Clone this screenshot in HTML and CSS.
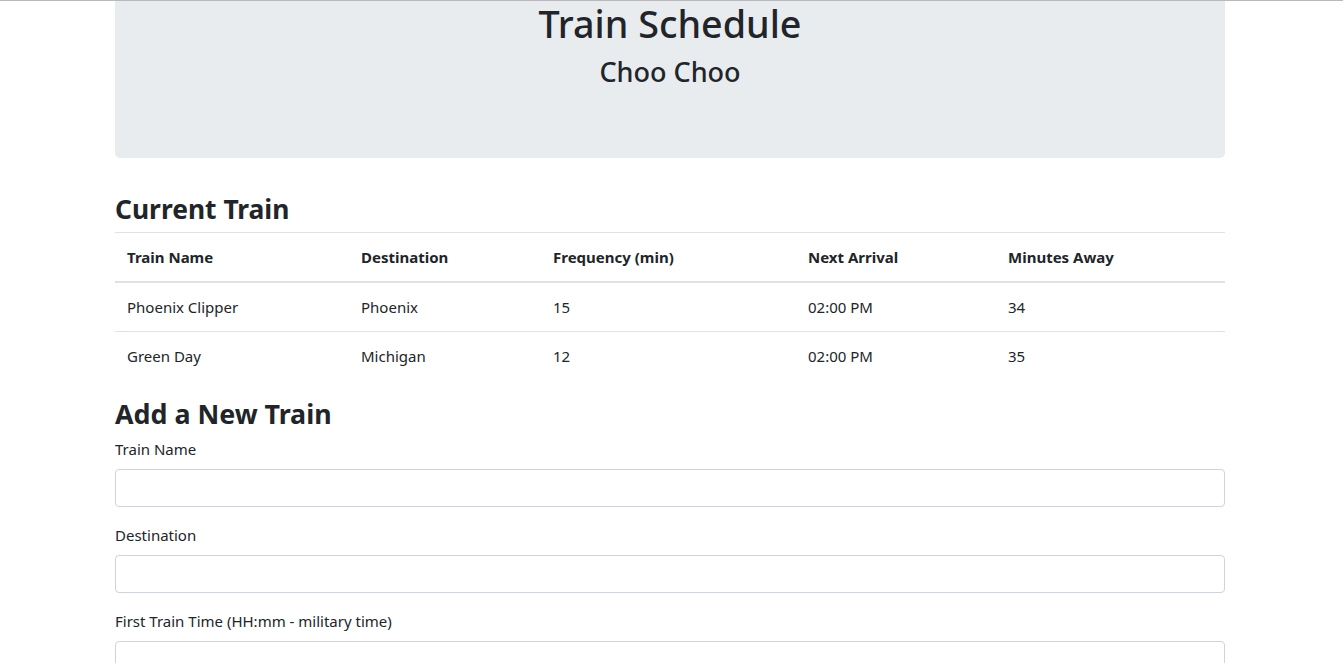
FILE: index.html
```html
<!DOCTYPE html>
<html>
<head>
<meta charset="utf-8">
<link rel="stylesheet" href="styles.css">
</head>
<body>
<div class="topline"></div>
<div class="container">
  <div class="jumbotron">
    <h1 class="title">Train Schedule</h1>
    <h3 class="subtitle">Choo Choo</h3>
  </div>
  <h2 class="section-title">Current Train</h2>
  <table class="table">
    <colgroup>
      <col class="c1"><col class="c2"><col class="c3"><col class="c4"><col class="c5">
    </colgroup>
    <thead>
      <tr><th>Train Name</th><th>Destination</th><th>Frequency (min)</th><th>Next Arrival</th><th>Minutes Away</th></tr>
    </thead>
    <tbody>
      <tr><td>Phoenix Clipper</td><td>Phoenix</td><td>15</td><td>02:00 PM</td><td>34</td></tr>
      <tr><td>Green Day</td><td>Michigan</td><td>12</td><td>02:00 PM</td><td>35</td></tr>
    </tbody>
  </table>
  <h2 class="section-title add">Add a New Train</h2>
  <form class="form">
    <div class="form-group">
      <label>Train Name</label>
      <input class="form-control" type="text">
    </div>
    <div class="form-group">
      <label>Destination</label>
      <input class="form-control" type="text">
    </div>
    <div class="form-group">
      <label>First Train Time (HH:mm - military time)</label>
      <input class="form-control" type="text">
    </div>
  </form>
</div>
</body>
</html>
```
FILE: styles.css
```css
html, body {
  margin: 0;
  padding: 0;
  background: #fff;
}
body {
  font-family: "Noto Sans", "Open Sans", sans-serif;
  font-size: 16px;
  line-height: 1.5;
  color: #212529;
  overflow: hidden;
}
.topline {
  height: 1px;
  background: #b9b9bd;
}
.container {
  width: 1110px;
  margin-left: 115px;
}
.jumbotron {
  background: #e9ecef;
  border-radius: 0 0 5px 5px;
  height: 157px;
  text-align: center;
  display: flex;
  flex-direction: column;
}
.title {
  margin: 0;
  font-size: 37.7px;
  font-weight: 500;
  line-height: 46px;
}
.subtitle {
  margin: 8px 0 0;
  font-size: 27px;
  font-weight: 500;
  line-height: 34px;
}
.section-title {
  margin: 32px 0 4px;
  font-size: 26.4px;
  font-weight: 700;
  line-height: 38px;
}
.section-title.add {
  margin: 15px 0 4px;
  font-size: 26.8px;
}
.table {
  width: 100%;
  border-collapse: collapse;
  table-layout: fixed;
}
.c1 { width: 234px; }
.c2 { width: 192px; }
.c3 { width: 255px; }
.c4 { width: 200px; }
.c5 { width: 229px; }
.table th, .table td {
  padding: 12px;
  text-align: left;
  border-top: 1px solid #dee2e6;
  font-size: 15px;
  line-height: 24px;
}
.table th {
  font-weight: 700;
  border-bottom: 2px solid #dee2e6;
}
.form-group {
  margin-bottom: 16px;
}
.form-group label {
  display: block;
  font-size: 15px;
  line-height: 24px;
  margin-bottom: 8px;
}
.form-control {
  display: block;
  box-sizing: border-box;
  width: 100%;
  height: 38px;
  border: 1px solid #ced4da;
  border-radius: 4px;
  padding: 6px 12px;
  font: inherit;
  background: #fff;
}
```
